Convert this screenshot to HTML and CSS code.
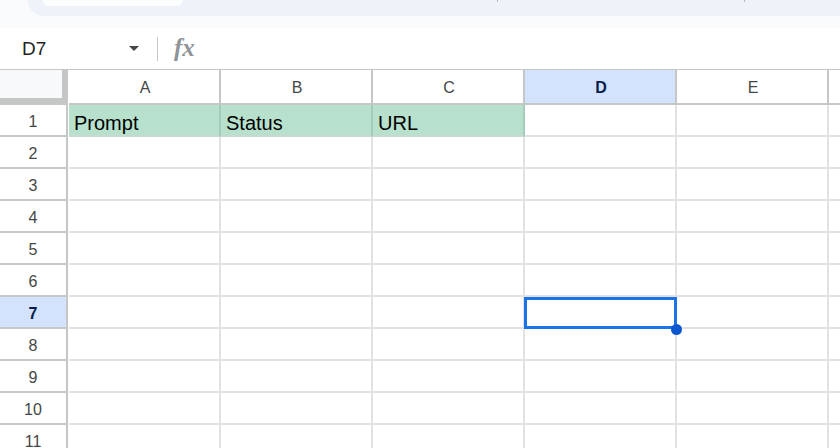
FILE: index.html
```html
<!DOCTYPE html>
<html>
<head>
<meta charset="utf-8">
<link rel="stylesheet" href="styles.css">
</head>
<body>
<div class="chrome">
  <div class="tabbar">
    <div class="pill"></div>
    <span class="tick t1"></span>
    <span class="tick t2"></span>
  </div>
</div>
<div class="fbar">
  <div class="namebox"><span class="ref">D7</span><span class="caret"></span></div>
  <div class="sep"></div>
  <span class="fx">fx</span>
</div>
<div class="sheet">
  <div class="hrow">
    <div class="corner"><div class="corner-in"></div></div>
    <div class="ch">A</div>
    <div class="ch">B</div>
    <div class="ch">C</div>
    <div class="ch on">D</div>
    <div class="ch">E</div>
    <div class="ch last"></div>
  </div>
  <div class="row"><div class="rh">1</div><div class="c g">Prompt</div><div class="c g">Status</div><div class="c g">URL</div><div class="c"></div><div class="c"></div><div class="c last"></div></div>
  <div class="row"><div class="rh">2</div><div class="c"></div><div class="c"></div><div class="c"></div><div class="c"></div><div class="c"></div><div class="c last"></div></div>
  <div class="row"><div class="rh">3</div><div class="c"></div><div class="c"></div><div class="c"></div><div class="c"></div><div class="c"></div><div class="c last"></div></div>
  <div class="row"><div class="rh">4</div><div class="c"></div><div class="c"></div><div class="c"></div><div class="c"></div><div class="c"></div><div class="c last"></div></div>
  <div class="row"><div class="rh">5</div><div class="c"></div><div class="c"></div><div class="c"></div><div class="c"></div><div class="c"></div><div class="c last"></div></div>
  <div class="row"><div class="rh">6</div><div class="c"></div><div class="c"></div><div class="c"></div><div class="c"></div><div class="c"></div><div class="c last"></div></div>
  <div class="row"><div class="rh on">7</div><div class="c"></div><div class="c"></div><div class="c"></div><div class="c cur"><div class="selbox"><div class="dot"></div></div></div><div class="c"></div><div class="c last"></div></div>
  <div class="row"><div class="rh">8</div><div class="c"></div><div class="c"></div><div class="c"></div><div class="c"></div><div class="c"></div><div class="c last"></div></div>
  <div class="row"><div class="rh">9</div><div class="c"></div><div class="c"></div><div class="c"></div><div class="c"></div><div class="c"></div><div class="c last"></div></div>
  <div class="row"><div class="rh">10</div><div class="c"></div><div class="c"></div><div class="c"></div><div class="c"></div><div class="c"></div><div class="c last"></div></div>
  <div class="row"><div class="rh">11</div><div class="c"></div><div class="c"></div><div class="c"></div><div class="c"></div><div class="c"></div><div class="c last"></div></div>
</div>
</body>
</html>
```

FILE: styles.css
```css
html, body {
  margin: 0;
  padding: 0;
}
body {
  width: 840px;
  height: 448px;
  overflow: hidden;
  background: #fff;
  font-family: "Liberation Sans", Arial, sans-serif;
}

/* top chrome */
.chrome {
  height: 28px;
  background: #f9fbfd;
  padding-left: 28px;
  box-sizing: border-box;
}
.tabbar {
  height: 16px;
  background: #eef2f9;
  border-bottom-left-radius: 16px;
  display: flex;
  align-items: flex-start;
}
.pill {
  margin-left: 15px;
  width: 140px;
  height: 6px;
  background: #fdfeff;
  border-radius: 0 0 9px 9px;
  flex: none;
}
.tick {
  width: 1px;
  height: 2px;
  background: #b4b8bc;
  flex: none;
}
.t1 { margin-left: 314px; }
.t2 { margin-left: 246px; }

/* formula bar */
.fbar {
  height: 41px;
  display: flex;
  align-items: center;
  background: #fff;
}
.namebox {
  display: flex;
  align-items: center;
  padding-left: 22px;
}
.ref {
  width: 107px;
  font-size: 19px;
  color: #1f1f1f;
}
.caret {
  width: 0;
  height: 0;
  border-left: 5.5px solid transparent;
  border-right: 5.5px solid transparent;
  border-top: 5px solid #444746;
  margin-top: -1px;
}
.sep {
  width: 1px;
  height: 24px;
  background: #c4c7c5;
  margin-left: 18px;
}
.fx {
  margin-left: 16px;
  font-family: "Liberation Serif", serif;
  font-style: italic;
  font-weight: bold;
  font-size: 25px;
  color: #909498;
  margin-top: -2px;
}

/* grid */
.sheet {
  border-top: 1px solid #c4c7c5;
}
.hrow {
  display: flex;
  height: 35px;
}
.corner {
  width: 69px;
  flex: none;
}
.corner-in {
  width: 62px;
  height: 28px;
  background: #f8f9fa;
  border-right: 6px solid #c4c7c5;
  border-bottom: 7px solid #c4c7c5;
}
.ch {
  width: 152px;
  flex: none;
  box-sizing: border-box;
  border-right: 2px solid #c4c7c5;
  border-bottom: 2px solid #c4c7c5;
  padding: 2px 0 0 2px;
  display: flex;
  align-items: center;
  justify-content: center;
  font-size: 16px;
  color: #444746;
}
.ch.last {
  flex: 1;
  border-right: none;
}
.ch.on {
  background: #d3e3fd;
  color: #041e49;
  font-weight: bold;
}

.row {
  display: flex;
  height: 32px;
}
.rh {
  width: 68px;
  margin-right: 1px;
  flex: none;
  box-sizing: border-box;
  border-right: 2px solid #c4c7c5;
  border-bottom: 2px solid #c4c7c5;
  padding-top: 3px;
  display: flex;
  align-items: center;
  justify-content: center;
  font-size: 16px;
  color: #444746;
}
.rh.on {
  background: #d3e3fd;
  color: #041e49;
  font-weight: bold;
}
.c {
  width: 152px;
  flex: none;
  box-sizing: border-box;
  border-right: 2px solid #e2e2e2;
  border-bottom: 2px solid #e2e2e2;
  padding: 0 5px 2px;
  display: flex;
  align-items: flex-end;
  font-size: 20px;
  line-height: 20px;
  color: #000;
}
.c.last {
  flex: 1;
  border-right: none;
}
.c.g {
  background: #b7e1cd;
  border-right-color: #a5ccb9;
  border-bottom-color: #c8d9d0;
}
.c.cur {
  position: relative;
}
.selbox {
  position: absolute;
  left: -1px;
  top: 0;
  width: 153px;
  height: 32px;
  box-sizing: border-box;
  border: 3px solid #1a73e8;
  z-index: 2;
}
.dot {
  position: absolute;
  right: -8px;
  bottom: -9px;
  width: 11px;
  height: 11px;
  border-radius: 50%;
  background: #0b57d0;
}
```
